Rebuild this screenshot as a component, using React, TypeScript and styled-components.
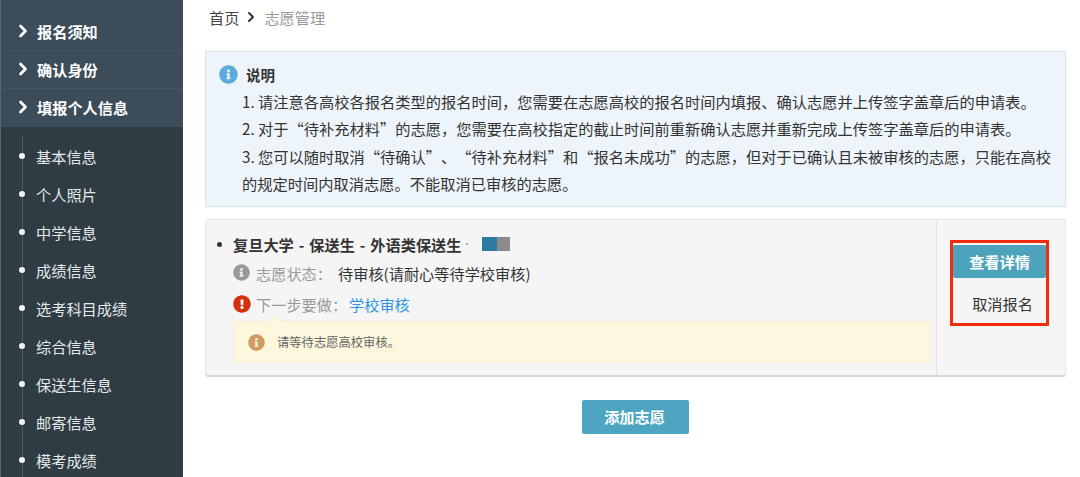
import React from "react";
import styled, { createGlobalStyle } from "styled-components";
import { ChevronRight } from "lucide-react";
import { FaInfoCircle, FaExclamationCircle } from "react-icons/fa";

const Global = createGlobalStyle`
  html, body { margin: 0; padding: 0; background: #fff; overflow: hidden; }
  body { font-family: "Noto Sans CJK SC", "Open Sans", sans-serif; }
`;

const Page = styled.div`
  width: 1080px;
  height: 477px;
  display: flex;
  overflow: hidden;
`;

const Sidebar = styled.aside`
  width: 183px;
  height: 477px;
  flex: none;
  background: #2f3c44;
  overflow: hidden;
  border-left: 1px solid #56656f;
  box-sizing: border-box;
`;

const TopMenu = styled.div`
  background: #3c4c58;
  padding-top: 13px;
  height: 127px;
  box-sizing: border-box;
`;

const TopItem = styled.div`
  height: 38px;
  display: flex;
  align-items: center;
  padding: 0 0 2px 12px;
  gap: 4px;
  color: #fff;
  font-size: 15.2px;
  font-weight: 700;
  line-height: 36px;
  border-bottom: 1px solid #445460;
  box-sizing: border-box;
  &:last-child { border-bottom: 0; }
`;

const SubMenu = styled.div`
  position: relative;
  padding-top: 11px;
  &::before {
    content: "";
    position: absolute;
    left: 21px;
    top: 9px;
    bottom: 0;
    width: 1px;
    background: #4b5a64;
  }
`;

const SubItem = styled.div`
  height: 38px;
  position: relative;
  display: flex;
  align-items: center;
  padding: 0 0 2px 35px;
  box-sizing: border-box;
  color: #e6e9eb;
  font-size: 15.2px;
  line-height: 36px;
  &::before {
    content: "";
    position: absolute;
    left: 18px;
    top: 15px;
    width: 6px;
    height: 6px;
    border-radius: 50%;
    background: #f2f4f5;
  }
`;

const Main = styled.main`
  flex: 1;
  padding: 6px 14px 0 22px;
  min-width: 0;
`;

const Crumbs = styled.div`
  display: flex;
  align-items: center;
  height: 22px;
  margin-left: 4px;
  gap: 4px;
  font-size: 15.2px;
  color: #444;
`;

const CrumbCurrent = styled.span`
  color: #999;
  margin-left: 1px;
`;

const Notice = styled.section`
  margin-top: 23px;
  height: 156px;
  box-sizing: border-box;
  background: #edf5fa;
  border: 1px solid #d4e6ee;
  padding: 9px 12px 0 13px;
  font-size: 15.25px;
  line-height: 27.5px;
  color: #333;
  text-spacing-trim: space-all;
  font-feature-settings: "palt" 0;
`;

const NoticeTitle = styled.div`
  display: flex;
  align-items: center;
  gap: 8px;
  font-weight: 700;
  font-size: 14.5px;
  color: #333;
  margin-bottom: -1px;
`;

const NoticeLine = styled.div`
  padding-left: 23px;
`;

const Card = styled.section`
  margin-top: 12px;
  height: 158px;
  box-sizing: border-box;
  display: flex;
  background: #f5f5f6;
  border: 1px solid #e6e6e6;
  border-bottom: 2px solid #d6d6d6;
  border-radius: 3px;
`;

const CardBody = styled.div`
  flex: 1;
  min-width: 0;
  padding: 11px 5px 0 11px;
`;

const CardTitle = styled.div`
  display: flex;
  align-items: center;
  height: 26px;
  font-size: 15.2px;
  font-weight: 700;
  color: #333;
  white-space: pre;
  word-spacing: 1.5px;
`;

const Dot = styled.span`
  width: 5px;
  height: 5px;
  border-radius: 50%;
  background: #333;
  flex: none;
  margin-right: 11px;
`;

const TinyDot = styled.span`
  width: 2px;
  height: 2px;
  background: #aaa;
  margin-left: 5px;
  flex: none;
`;

const Swatch = styled.span`
  display: inline-block;
  width: 28px;
  height: 14px;
  margin-left: 14px;
  background: linear-gradient(to right, #2e7ba1 0 52%, #8b8b8b 52% 100%);
`;

const Row = styled.div`
  display: flex;
  align-items: center;
  height: 31px;
  margin-left: 16px;
  font-size: 15.2px;
  color: #333;
`;

const Label = styled.span`
  color: #999;
  margin-left: 6px;
  width: 82px;
  white-space: nowrap;
`;

const NextLabel = styled(Label)`
  margin-left: 5px;
  width: 93px;
`;

const Link = styled.span`
  color: #2b93e6;
`;

const Hint = styled.div`
  position: relative;
  margin: 2px 0 0 16px;
  height: 42px;
  display: flex;
  align-items: center;
  gap: 12px;
  padding-left: 14px;
  background: #fdf7de;
  border: 1px solid #f6f0d8;
  box-sizing: border-box;
  font-size: 12.3px;
  color: #666;
  &::before {
    content: "";
    position: absolute;
    left: 34px;
    top: -7px;
    width: 0;
    height: 0;
    border-left: 7px solid transparent;
    border-right: 7px solid transparent;
    border-bottom: 7px solid #fdf7de;
  }
`;

const Actions = styled.div`
  width: 129px;
  flex: none;
  border-left: 1px solid #e3e3e3;
  padding: 20px 0 0 13px;
  box-sizing: border-box;
`;

const ActionBox = styled.div`
  width: 99px;
  height: 86px;
  box-sizing: border-box;
  border: 3px solid #f02c0c;
  display: flex;
  flex-direction: column;
`;

const PrimaryAction = styled.div`
  height: 33px;
  margin-top: 2px;
  padding-bottom: 2px;
  box-sizing: border-box;
  background: #4da2bc;
  border-radius: 2px;
  color: #fff;
  font-size: 15.2px;
  font-weight: 700;
  display: flex;
  align-items: center;
  justify-content: center;
`;

const SecondaryAction = styled.div`
  flex: 1;
  color: #333;
  font-size: 15.2px;
  padding: 5px 0 0 6px;
  box-sizing: border-box;
  display: flex;
  align-items: center;
  justify-content: center;
`;

const Footer = styled.div`
  display: flex;
  justify-content: center;
  margin-top: 23px;
`;

const AddButton = styled.div`
  width: 107px;
  height: 34px;
  padding: 0 2px 2px 0;
  box-sizing: border-box;
  background: #4da5c1;
  border-radius: 2px;
  color: #fff;
  font-size: 15.2px;
  font-weight: 700;
  display: flex;
  align-items: center;
  justify-content: center;
`;

const topItems = ["报名须知", "确认身份", "填报个人信息"];
const subItems = ["基本信息", "个人照片", "中学信息", "成绩信息", "选考科目成绩", "综合信息", "保送生信息", "邮寄信息", "模考成绩"];

export default function App() {
  return (
    <Page>
      <Global />
      <Sidebar>
        <TopMenu>
          {topItems.map((t) => (
            <TopItem key={t}>
              <ChevronRight size={20} strokeWidth={3.2} />
              {t}
            </TopItem>
          ))}
        </TopMenu>
        <SubMenu>
          {subItems.map((t) => (
            <SubItem key={t}>{t}</SubItem>
          ))}
        </SubMenu>
      </Sidebar>
      <Main>
        <Crumbs>
          首页
          <ChevronRight size={16} strokeWidth={3} color="#333" />
          <CrumbCurrent>志愿管理</CrumbCurrent>
        </Crumbs>
        <Notice>
          <NoticeTitle>
            <FaInfoCircle size={19} color="#5aabdc" />
            说明
          </NoticeTitle>
          <NoticeLine>1. 请注意各高校各报名类型的报名时间，您需要在志愿高校的报名时间内填报、确认志愿并上传签字盖章后的申请表。</NoticeLine>
          <NoticeLine>2. 对于“待补充材料”的志愿，您需要在高校指定的截止时间前重新确认志愿并重新完成上传签字盖章后的申请表。</NoticeLine>
          <NoticeLine>3. 您可以随时取消“待确认”、“待补充材料”和“报名未成功”的志愿，但对于已确认且未被审核的志愿，只能在高校的规定时间内取消志愿。不能取消已审核的志愿。</NoticeLine>
        </Notice>
        <Card>
          <CardBody>
            <CardTitle>
              <Dot />
              复旦大学 - 保送生 - 外语类保送生
              <TinyDot />
              <Swatch />
            </CardTitle>
            <Row>
              <FaInfoCircle size={17} color="#999" />
              <Label>志愿状态：</Label>
              待审核(请耐心等待学校审核)
            </Row>
            <Row>
              <FaExclamationCircle size={18} color="#d4300e" />
              <NextLabel>下一步要做：</NextLabel>
              <Link>学校审核</Link>
            </Row>
            <Hint>
              <FaInfoCircle size={17} color="#d09a62" />
              请等待志愿高校审核。
            </Hint>
          </CardBody>
          <Actions>
            <ActionBox>
              <PrimaryAction>查看详情</PrimaryAction>
              <SecondaryAction>取消报名</SecondaryAction>
            </ActionBox>
          </Actions>
        </Card>
        <Footer>
          <AddButton>添加志愿</AddButton>
        </Footer>
      </Main>
    </Page>
  );
}
